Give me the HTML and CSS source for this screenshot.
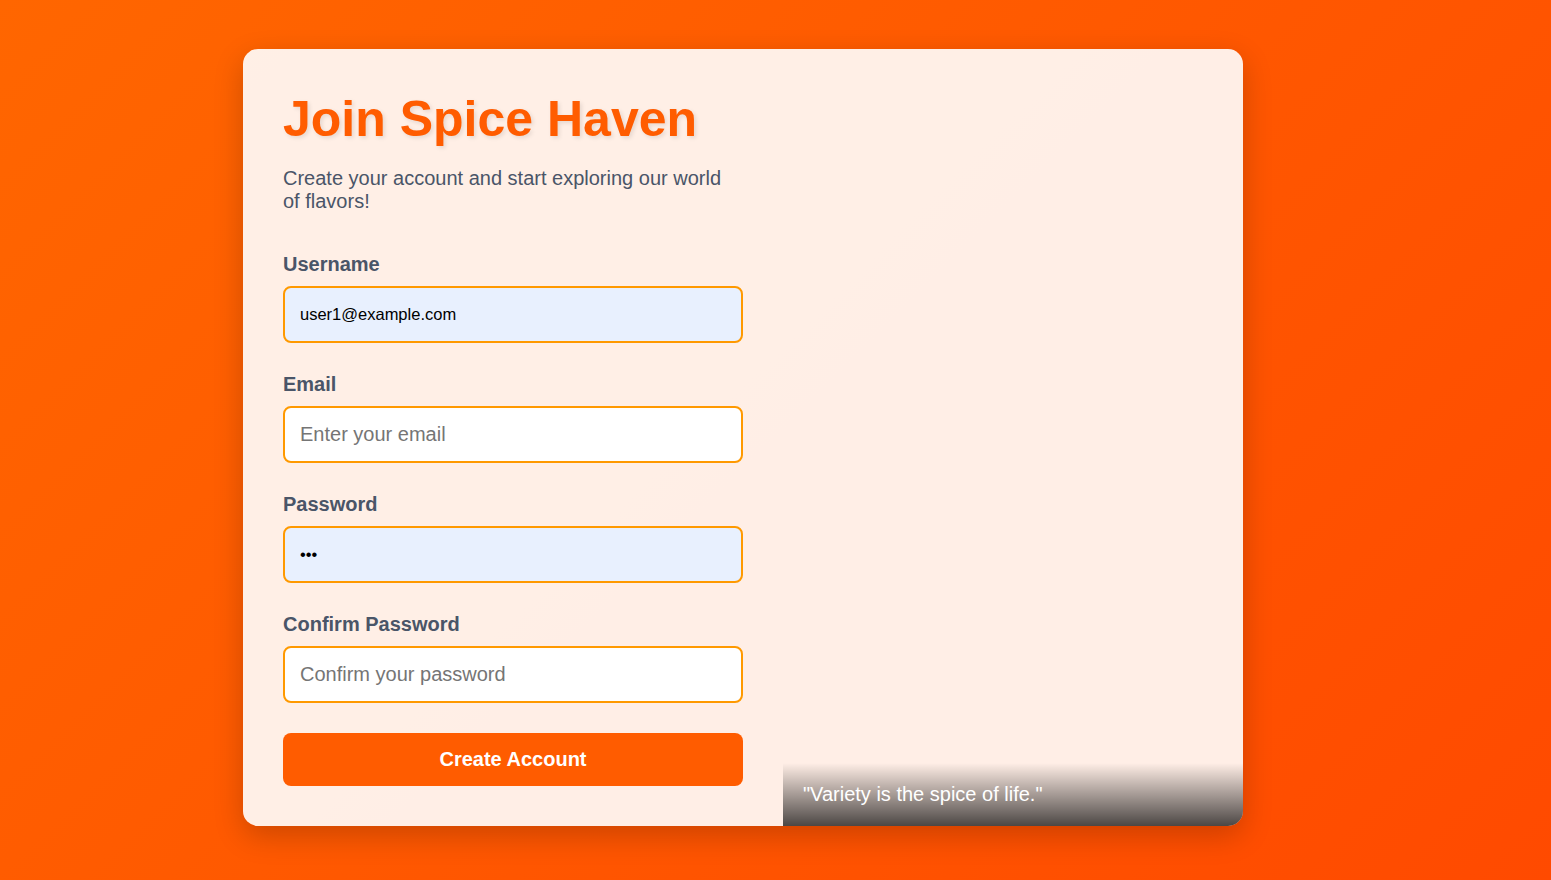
FILE: index.html
```html
<!DOCTYPE html>
<html lang="en">
<head>
<meta charset="utf-8">
<title>Join Spice Haven</title>
<link rel="stylesheet" href="styles.css">
</head>
<body>
<div class="page">
  <div class="card">
    <div class="form-side">
      <h1 class="title">Join Spice Haven</h1>
      <p class="subtitle">Create your account and start exploring our world of flavors!</p>
      <form class="form">
        <div class="group">
          <label class="label" for="username">Username</label>
          <input class="input filled" id="username" type="text" value="user1@example.com">
        </div>
        <div class="group">
          <label class="label" for="email">Email</label>
          <input class="input" id="email" type="email" placeholder="Enter your email">
        </div>
        <div class="group">
          <label class="label" for="password">Password</label>
          <input class="input filled" id="password" type="password" value="abc">
        </div>
        <div class="group">
          <label class="label" for="confirm">Confirm Password</label>
          <input class="input" id="confirm" type="password" placeholder="Confirm your password">
        </div>
        <button class="btn" type="button">Create Account</button>
      </form>
    </div>
    <div class="image-side">
      <div class="caption">"Variety is the spice of life."</div>
    </div>
  </div>
</div>
</body>
</html>
```

FILE: styles.css
```css
* { box-sizing: border-box; }
html, body { margin: 0; padding: 0; height: 100%; }
body {
  font-family: "Liberation Sans", Arial, sans-serif;
  background: linear-gradient(135deg, #ff6600 0%, #ff4a00 100%);
  background-attachment: fixed;
  overflow: hidden;
}
.page {
  padding: 49px 0 0 243px;
  display: flex;
  align-items: flex-start;
}
.card {
  width: 1000px;
  display: grid;
  grid-template-columns: 540px 460px;
  background: rgba(255, 255, 255, 0.9);
  border-radius: 15px;
  overflow: hidden;
  box-shadow: 0 10px 30px rgba(0, 0, 0, 0.2);
}
.form-side {
  padding: 40px;
  display: flex;
  flex-direction: column;
}
.title {
  margin: 2px 0 20px;
  font-size: 50px;
  font-weight: bold;
  line-height: 56px;
  color: #ff5c00;
  text-shadow: 2px 2px 4px rgba(0, 0, 0, 0.1);
}
.subtitle {
  margin: 0 0 40px;
  font-size: 20px;
  line-height: 23px;
  color: #4a5568;
}
.form {
  display: flex;
  flex-direction: column;
}
.group {
  display: flex;
  flex-direction: column;
  margin-bottom: 30px;
}
.label {
  font-size: 20px;
  line-height: 23px;
  font-weight: bold;
  color: #4a5568;
  margin-bottom: 10px;
}
.input {
  width: 100%;
  height: 57px;
  padding: 15px;
  border: 2px solid #ff9900;
  border-radius: 8px;
  background: #ffffff;
  font-family: "Liberation Sans", Arial, sans-serif;
  font-size: 20px;
  line-height: 23px;
  color: #000;
  outline: none;
}
.input::placeholder { color: #757575; }
.input.filled {
  background: #e8f0fe;
  font-size: 16.5px;
}
.btn {
  width: 100%;
  height: 53px;
  padding: 15px;
  border: none;
  border-radius: 8px;
  background: #ff5c00;
  color: #ffffff;
  font-family: "Liberation Sans", Arial, sans-serif;
  font-size: 20px;
  line-height: 23px;
  font-weight: bold;
  cursor: pointer;
}
.image-side {
  display: flex;
  flex-direction: column;
  justify-content: flex-end;
}
.caption {
  padding: 20px;
  font-size: 20px;
  line-height: 23px;
  color: #ffffff;
  background: linear-gradient(to bottom, rgba(0, 0, 0, 0), rgba(0, 0, 0, 0.7));
}
```
